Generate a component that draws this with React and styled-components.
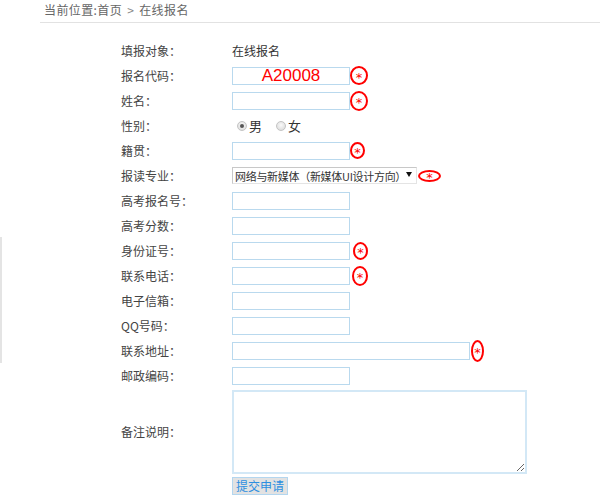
import styled, { createGlobalStyle } from "styled-components";

const Global = createGlobalStyle`
  body {
    margin: 0;
    background: #fff;
    font-family: "Noto Sans CJK SC", "Liberation Sans", sans-serif;
    font-size: 12px;
    color: #444;
  }
`;

const Page = styled.div`
  width: 600px;
  height: 500px;
  position: relative;
  overflow: hidden;
`;

const EdgeStrip = styled.div`
  position: absolute;
  left: 0;
  top: 237px;
  width: 2px;
  height: 126px;
  background: #e4e4e4;
`;

const Crumb = styled.div`
  box-sizing: border-box;
  margin-left: 40px;
  padding-left: 4px;
  height: 23px;
  line-height: 20px;
  border-bottom: 1px solid #e2e2e2;
  color: #666;
  font-size: 12px;
  letter-spacing: 0.4px;
`;

const Sep = styled.span`
  margin: 0 5px;
  color: #888;
`;

const Form = styled.div`
  padding: 15px 0 0 121px;
`;

const Row = styled.div`
  display: grid;
  grid-template-columns: 111px 1fr;
  align-items: center;
  height: ${(p) => p.h || 25}px;
`;

const Label = styled.div`
  color: #444;
  white-space: nowrap;
`;

const Value = styled.div`
  display: flex;
  align-items: center;
  color: #333;
`;

const Input = styled.input`
  box-sizing: border-box;
  width: ${(p) => p.w || 118}px;
  height: 18px;
  border: 1px solid #b9d9ee;
  outline: none;
  padding: 0 4px;
  margin: 0;
  font-family: "Liberation Sans", Arial, sans-serif;
  font-size: 17px;
  color: #f00;
  text-align: center;
  background: #fff;
`;

const Mark = styled.span`
  box-sizing: border-box;
  display: inline-flex;
  align-items: center;
  justify-content: center;
  width: ${(p) => p.w}px;
  height: ${(p) => p.h}px;
  margin-left: ${(p) => p.ml || 0}px;
  border: 2px solid #f00;
  border-radius: 50%;
  color: #f00;
  font-family: "DejaVu Sans", sans-serif;
  font-size: 13px;
  line-height: 1;
  padding-top: 4px;
`;

const RadioGroup = styled.label`
  display: inline-flex;
  align-items: center;
  margin-left: ${(p) => p.ml || 0}px;
  color: #333;
  font-size: 13px;
`;

const RadioDot = styled.span`
  box-sizing: border-box;
  width: 10px;
  height: 10px;
  border-radius: 50%;
  border: 1px solid #c4c4c4;
  background: radial-gradient(circle at 50% 40%, #fafafa, #d6d6d6);
  margin-right: 2px;
  display: inline-flex;
  align-items: center;
  justify-content: center;
  &::after {
    content: "";
    width: 4px;
    height: 4px;
    border-radius: 50%;
    background: ${(p) => (p.on ? "#555" : "transparent")};
  }
`;

const SelectBox = styled.div`
  box-sizing: border-box;
  width: 185px;
  height: 17px;
  border: 1px solid #c8c8c8;
  border-right-color: #e4e4e4;
  border-bottom-color: #e4e4e4;
  display: flex;
  align-items: center;
  justify-content: space-between;
  padding: 0 5px 0 2px;
  color: #333;
  font-size: 11px;
  letter-spacing: -0.3px;
  white-space: nowrap;
  overflow: hidden;
  background: #fff;
`;

const Arrow = styled.span`
  width: 0;
  height: 0;
  border-left: 3px solid transparent;
  border-right: 3px solid transparent;
  border-top: 5px solid #111;
  margin-top: -3px;
`;

const TextArea = styled.textarea`
  box-sizing: border-box;
  width: 295px;
  height: 84px;
  border: 2px solid #d3e8f6;
  outline: none;
  resize: both;
  margin: 0;
`;

const Submit = styled.button`
  box-sizing: border-box;
  height: 18px;
  width: 56px;
  padding: 0;
  border: 1px solid #b3d6ef;
  background: #e2e2e2;
  color: #2c8ee0;
  font-family: "Noto Sans CJK SC", sans-serif;
  font-size: 12px;
  line-height: 16px;
  cursor: pointer;
`;

const fields = [
  { label: "高考报名号：" },
  { label: "高考分数：" },
  { label: "身份证号：", mark: { w: 15, h: 18, ml: 3 } },
  { label: "联系电话：", mark: { w: 16, h: 20, ml: 2 } },
  { label: "电子信箱：" },
  { label: "QQ号码：" },
  { label: "联系地址：", w: 238, mark: { w: 13, h: 22, ml: 1 } },
  { label: "邮政编码：" },
];

export default function App() {
  return (
    <Page>
      <Global />
      <EdgeStrip />
      <Crumb>
        当前位置:首页<Sep>&gt;</Sep>在线报名
      </Crumb>
      <Form>
        <Row>
          <Label>填报对象：</Label>
          <Value>在线报名</Value>
        </Row>
        <Row>
          <Label>报名代码：</Label>
          <Value>
            <Input defaultValue="A20008" />
            <Mark w={18} h={19}>*</Mark>
          </Value>
        </Row>
        <Row>
          <Label>姓名：</Label>
          <Value>
            <Input />
            <Mark w={18} h={20}>*</Mark>
          </Value>
        </Row>
        <Row>
          <Label>性别：</Label>
          <Value>
            <RadioGroup ml={5}>
              <RadioDot on />男
            </RadioGroup>
            <RadioGroup ml={14}>
              <RadioDot />女
            </RadioGroup>
          </Value>
        </Row>
        <Row>
          <Label>籍贯：</Label>
          <Value>
            <Input />
            <Mark w={15} h={17}>*</Mark>
          </Value>
        </Row>
        <Row>
          <Label>报读专业：</Label>
          <Value>
            <SelectBox>
              <span>网络与新媒体（新媒体UI设计方向）</span>
              <Arrow />
            </SelectBox>
            <Mark w={23} h={12} ml={1}>*</Mark>
          </Value>
        </Row>
        {fields.map((f) => (
          <Row key={f.label}>
            <Label>{f.label}</Label>
            <Value>
              <Input w={f.w} />
              {f.mark && (
                <Mark w={f.mark.w} h={f.mark.h} ml={f.mark.ml}>
                  *
                </Mark>
              )}
            </Value>
          </Row>
        ))}
        <Row h={87}>
          <Label>备注说明：</Label>
          <Value>
            <TextArea />
          </Value>
        </Row>
        <Row h={21}>
          <Label />
          <Value>
            <Submit>提交申请</Submit>
          </Value>
        </Row>
      </Form>
    </Page>
  );
}
